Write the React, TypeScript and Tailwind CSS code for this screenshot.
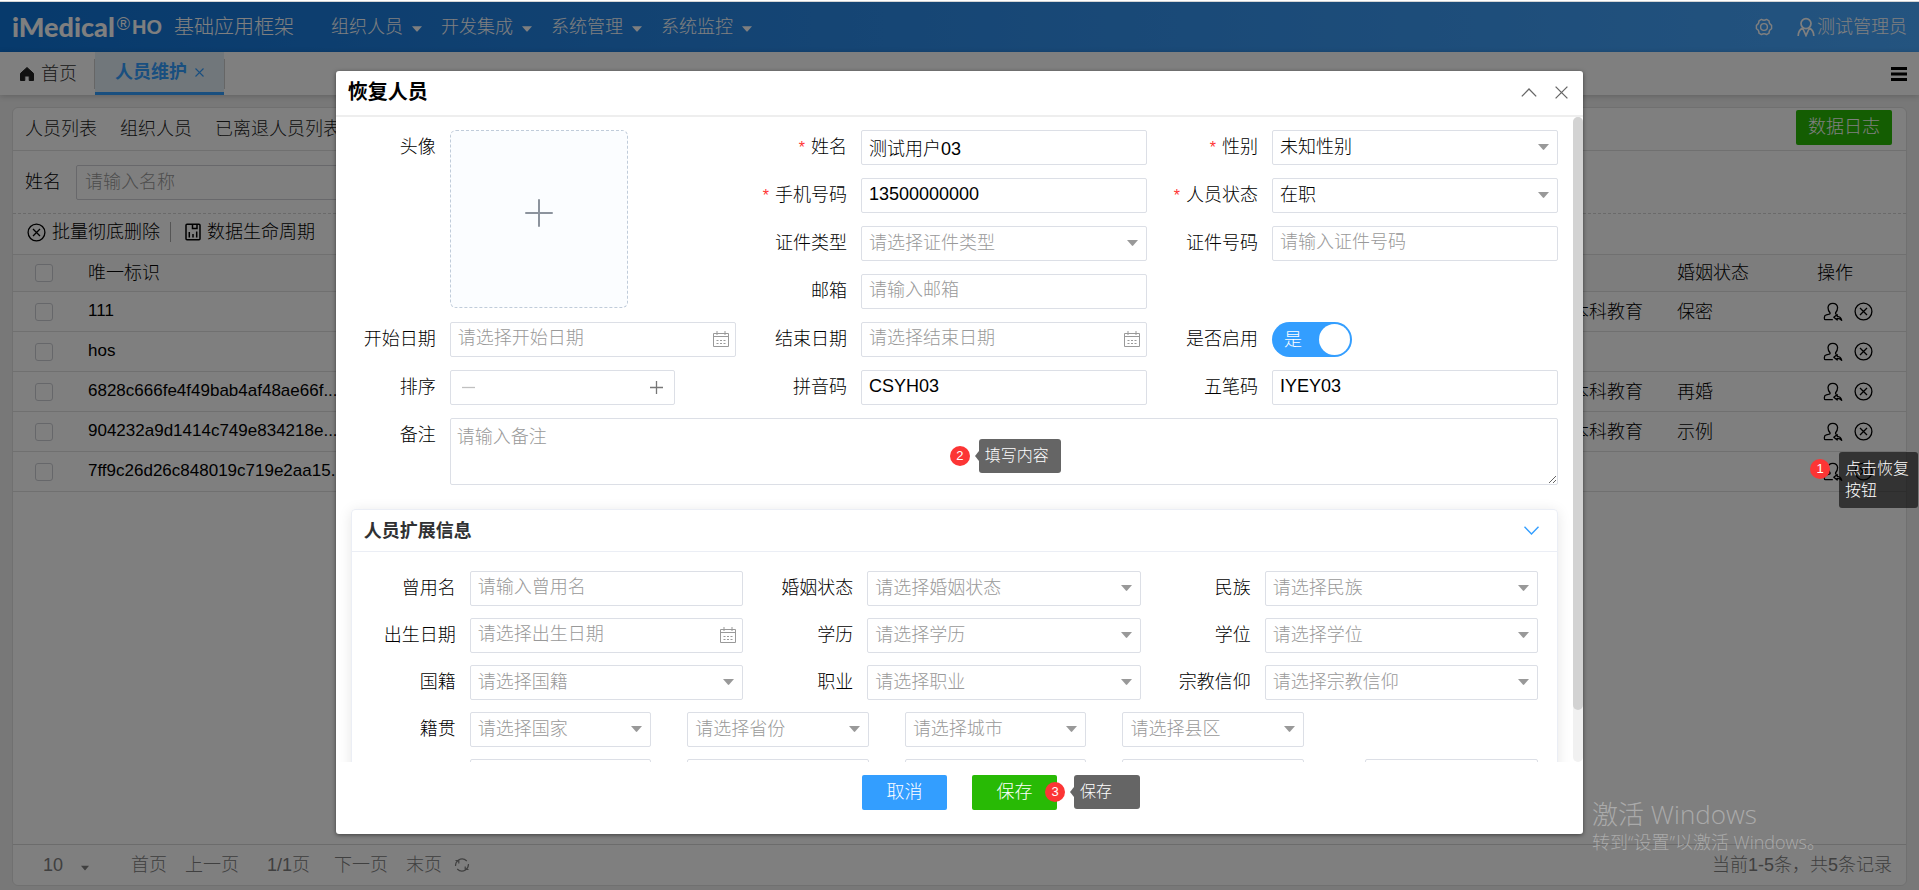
import { useId, type ReactNode } from "react";

const menus = ["组织人员", "开发集成", "系统管理", "系统监控"];

const people = [
  { id: "111", education: "大学本科教育", marriage: "保密" },
  { id: "hos", education: "", marriage: "" },
  { id: "6828c666fe4f49bab4af48ae66f...", education: "大学本科教育", marriage: "再婚" },
  { id: "904232a9d1414c749e834218e...", education: "大学本科教育", marriage: "示例" },
  { id: "7ff9c26d26c848019c719e2aa15...", education: "", marriage: "" },
];

const box =
  "h-[35px] w-full rounded-[2px] border border-[#dcdfe6] bg-white pb-0.5 pl-[7px] text-lg leading-6 outline-none placeholder:text-[#999] placeholder:opacity-100";

function Caret({ className }: { className?: string }) {
  return (
    <svg className={className} width="11" height="6" viewBox="0 0 11 6" aria-hidden="true">
      <path d="M0 0H11L6.2 5.6Q5.5 6.3 4.8 5.6Z" fill="currentColor" />
    </svg>
  );
}

function CircleX() {
  return (
    <svg width="19" height="19" viewBox="0 0 19 19" fill="none" stroke="currentColor" strokeWidth="1.3" aria-hidden="true">
      <circle cx="9.5" cy="9.5" r="8.4" />
      <path d="M6 6L13 13M13 6L6 13" />
    </svg>
  );
}

function RestoreUser() {
  return (
    <svg width="20" height="20" viewBox="0 0 20 20" fill="none" stroke="currentColor" strokeWidth="1.3" strokeLinejoin="round" aria-hidden="true">
      <path d="M9.8 17.6H2.4Q1.4 17.6 1.4 16.4V15.2Q1.4 13.2 3.4 12.8L6.2 12.2Q7.4 11.8 7 10.8Q5 8.6 5 5.6Q5.4 1.4 9.8 1.4Q14.2 1.4 14.6 5.6Q14.6 8.6 12.6 10.8Q12.2 11.8 13.4 12.4" />
      <path d="M10.8 15.2L14.2 12.6V14.3Q18 14.6 18.7 18.4Q17 16.2 14.2 16.3V18Z" />
    </svg>
  );
}

function CalendarIcon() {
  return (
    <svg className="pointer-events-none absolute right-[7px] top-2" width="16" height="18" viewBox="0 0 16 18" fill="none" stroke="#999" aria-hidden="true">
      <path d="M.5 3.5H15.5V16.5H.5ZM.5 6.5H15.5M4 1V5M12 1V5" />
      <path d="M3.5 10.5H12.5M3.5 13.5H12.5" strokeDasharray="2 1.5" />
    </svg>
  );
}

function Field({
  label,
  required,
  className = "",
  labelWidth = "w-[114px]",
  children,
}: {
  label: string;
  required?: boolean;
  className?: string;
  labelWidth?: string;
  children: (id: string) => ReactNode;
}) {
  const id = useId();
  return (
    <div className={`flex min-w-0 items-start ${className}`}>
      <label htmlFor={id} className={`${labelWidth} shrink-0 pr-3.5 text-right leading-[34px] whitespace-nowrap`}>
        {required && <span className="mr-1.5 text-base text-[#f33]">*</span>}
        {label}
      </label>
      <div className="relative min-w-0 flex-1">{children(id)}</div>
    </div>
  );
}

function Picker({ id, label, placeholder, value }: { id?: string; label?: string; placeholder?: string; value?: string }) {
  return (
    <div className="relative">
      <select id={id} aria-label={label} className={`${box} appearance-none pr-8 ${value ? "text-black" : "text-[#999]"}`}>
        <option>{value ?? placeholder}</option>
      </select>
      <Caret className="pointer-events-none absolute right-[9px] top-[14px] text-[#999]" />
    </div>
  );
}

function DateBox({ id, placeholder }: { id: string; placeholder: string }) {
  return (
    <>
      <input id={id} type="text" placeholder={placeholder} className={`${box} pr-8`} />
      <CalendarIcon />
    </>
  );
}

function Step({ n, text, className }: { n: number; text: string; className: string }) {
  return (
    <div className={`absolute flex items-center text-base ${className}`}>
      <span className="flex size-5 shrink-0 items-center justify-center rounded-full bg-[#fc3535] text-[13px] text-white">{n}</span>
      <span className="ml-[5px] size-0 shrink-0 border-y-5 border-r-4 border-y-transparent border-r-[#656565]" />
      <span className="min-w-[66px] rounded-[3px] bg-[#656565] py-1.5 pl-1.5 pr-3 leading-[22px] whitespace-nowrap text-white">{text}</span>
    </div>
  );
}

function TopBar() {
  return (
    <header className="flex h-[50px] items-center bg-linear-to-r from-[#0e74d8] to-[#48a8ff] px-3 text-lg text-white">
      <div className="flex w-[162px] items-center">
        <span className="font-[Lato] text-[27px] leading-8 font-black">iMedical</span>
        <span className="ml-0.5 pb-1.5 text-lg leading-5 font-normal">®</span>
        <span className="ml-0.5 text-xl font-bold">HO</span>
      </div>
      <span className="text-xl">基础应用框架</span>
      <nav className="ml-[37px] flex flex-1 gap-[19px]">
        {menus.map((m) => (
          <a key={m} href="#" className="flex items-center gap-[9px]">
            {m}
            <Caret className="mt-1 w-2.5" />
          </a>
        ))}
      </nav>
      <button aria-label="设置" className="mr-6">
        <svg width="18" height="18" viewBox="0 0 18 18" fill="none" stroke="currentColor" strokeWidth="1.4" strokeLinejoin="round">
          <path d="M6.4 1.4Q9 3.2 11.6 1.4L14 2.8Q13.8 5.8 16.6 7.3V10.7Q13.8 12.2 14 15.2L11.6 16.6Q9 14.8 6.4 16.6L4 15.2Q4.2 12.2 1.4 10.7V7.3Q4.2 5.8 4 2.8Z" />
          <circle cx="9" cy="9" r="3.4" />
        </svg>
      </button>
      <button className="flex items-center gap-0.5">
        <svg width="18" height="20" viewBox="0 0 18 20" fill="none" stroke="currentColor" strokeWidth="1.7">
          <circle cx="9" cy="6.6" r="5" />
          <path d="M1.2 19Q1.2 13.4 5.6 11M16.8 19Q16.8 13.4 12.4 11M5.6 11L9 18.5L12.4 11" />
        </svg>
        测试管理员
      </button>
    </header>
  );
}

function TabStrip() {
  return (
    <div className="flex h-[43px] shrink-0 items-center bg-white text-lg shadow-[0_1px_6px_rgba(0,0,0,0.2)]">
      <a href="#" className="flex h-[30px] w-[95px] items-center gap-1.5 border-r border-[#ccc] pl-[19px] text-[#333]">
        <svg width="16" height="16" viewBox="0 0 16 16" fill="#222" aria-hidden="true">
          <path d="M8 1.5L14.5 7.4V14.5H10.2V10H5.8V14.5H1.5V7.4Z" stroke="#222" strokeLinejoin="round" />
        </svg>
        首页
      </a>
      <div className="flex h-full w-[129px] items-center justify-center gap-2 border-b-3 border-[#339eff] bg-[#e3eef7] font-bold text-[#339eff]">
        人员维护
        <button aria-label="关闭">
          <svg width="9" height="9" viewBox="0 0 9 9" stroke="currentColor" strokeWidth="1.1">
            <path d="M.5 .5L8.5 8.5M8.5 .5L.5 8.5" />
          </svg>
        </button>
      </div>
      <span className="h-[30px] w-px bg-[#ccc]" />
      <button aria-label="菜单" className="ml-auto mr-3">
        <svg width="16" height="14" viewBox="0 0 16 14" fill="#000">
          <path d="M0 0H16V3H0ZM0 5.5H16V8.5H0ZM0 11H16V14H0Z" />
        </svg>
      </button>
    </div>
  );
}

const check = "block size-[18px] appearance-none rounded-[3px] border border-[#ccced4] bg-white";

function PeoplePage() {
  return (
    <main className="mx-3 mt-3 mb-1 flex flex-1 flex-col rounded-md border border-[#e0e0e0] bg-white text-lg">
      <div className="flex h-[43px] shrink-0 items-center gap-[23px] border-b border-[#e0e0e0] pr-3.5 pl-3 text-[#222]">
        <a href="#">人员列表</a>
        <a href="#">组织人员</a>
        <a href="#">已离退人员列表</a>
        <button className="mb-1 ml-auto h-[35px] rounded-[2px] bg-[#28ba05] px-3 text-white">数据日志</button>
      </div>
      <div className="flex h-[63px] shrink-0 items-center border-b border-dashed border-[#d4d4d4] pl-3">
        <label htmlFor="search" className="w-[51px]">姓名</label>
        <input id="search" placeholder="请输入名称" className="h-[35px] w-[400px] rounded-[2px] border border-[#d0d0d6] px-2 placeholder:text-[#999]" />
      </div>
      <div className="flex h-10 shrink-0 items-center pb-1 pl-3.5">
        <button className="flex items-center gap-1.5"><CircleX />批量彻底删除</button>
        <span className="mx-2.5 h-5 w-px bg-[#aaa]" />
        <button className="flex items-center gap-1.5">
          <svg className="ml-1" width="16" height="18" viewBox="0 0 16 18" fill="none" stroke="currentColor" strokeWidth="1.5" aria-hidden="true">
            <rect x="1" y="1.2" width="14" height="15.6" rx="1" />
            <path d="M7.5 1.2V5.5H12V1.2M4.3 9V14.5M8 11V14.5M11.7 8.5V14.5" />
          </svg>
          数据生命周期
        </button>
      </div>
      <table className="w-full table-fixed border-t border-[#e0e0e0] text-left">
        <colgroup>
          <col className="w-[75px]" />
          <col />
          <col className="w-[142px]" />
          <col className="w-[140px]" />
          <col className="w-[89px]" />
        </colgroup>
        <thead>
          <tr className="h-[37px] border-b border-[#e0e0e0] bg-[#fafafa]">
            <th className="pl-[22px]"><input type="checkbox" aria-label="全选" className={check} /></th>
            <th className="font-light">唯一标识</th>
            <th className="font-light">学历</th>
            <th className="font-light">婚姻状态</th>
            <th className="font-light">操作</th>
          </tr>
        </thead>
        <tbody>
          {people.map((p) => (
            <tr key={p.id} className="h-10 border-b border-[#e0e0e0]">
              <td className="pl-[22px]"><input type="checkbox" aria-label={p.id} className={check} /></td>
              <td className="text-[17px]">{p.id}</td>
              <td>{p.education}</td>
              <td>{p.marriage}</td>
              <td>
                <div className="flex items-center gap-[11px] pl-1.5">
                  <button aria-label="恢复"><RestoreUser /></button>
                  <button aria-label="删除"><CircleX /></button>
                </div>
              </td>
            </tr>
          ))}
        </tbody>
      </table>
      <footer className="mt-auto flex h-[41px] items-center border-t border-[#d8d8d8] pr-3.5 pl-[30px] text-[#808080]">
        <div className="relative w-[88px]">
          <select aria-label="每页条数" className="w-12 appearance-none bg-transparent outline-none"><option>10</option></select>
          <Caret className="pointer-events-none absolute top-[14px] left-[38px] w-2" />
        </div>
        <div className="flex items-center gap-[18px]">
          <a href="#">首页</a>
          <a href="#">上一页</a>
          <span className="mr-1.5 ml-2.5">1/1页</span>
          <a href="#">下一页</a>
          <a href="#">末页</a>
        </div>
        <button aria-label="刷新" className="ml-3">
          <svg width="16" height="16" viewBox="0 0 16 16" fill="none" stroke="currentColor" strokeWidth="1.2">
            <path d="M1.5 9Q1.5 5 4.5 3Q9 .4 12.8 4M14.5 7Q14.5 11 11.5 13Q7 15.6 3.2 12M1.5 3.5H4.8V6.5M14.5 12.5H11.2V9.5" />
          </svg>
        </button>
        <span className="ml-auto">当前1-5条，共5条记录</span>
      </footer>
    </main>
  );
}

function BaseForm() {
  return (
    <div className="grid grid-cols-3 gap-x-[11px] gap-y-[13px] pt-[13px]">
      <Field label="头像" className="row-span-4">
        {(id) => (
          <button id={id} aria-label="上传头像" className="flex size-[178px] items-center justify-center rounded-md border border-dashed border-[#c0ccda] bg-[#fbfdff] pb-3">
            <svg width="28" height="28" viewBox="0 0 28 28" stroke="#8c939d" strokeWidth="2" strokeLinecap="round">
              <path d="M14 1V27M1 14H27" />
            </svg>
          </button>
        )}
      </Field>
      <Field label="姓名" required>{(id) => <input id={id} defaultValue="测试用户03" className={box} />}</Field>
      <Field label="性别" required>{(id) => <Picker id={id} value="未知性别" />}</Field>
      <Field label="手机号码" required>{(id) => <input id={id} defaultValue="13500000000" className={box} />}</Field>
      <Field label="人员状态" required>{(id) => <Picker id={id} value="在职" />}</Field>
      <Field label="证件类型">{(id) => <Picker id={id} placeholder="请选择证件类型" />}</Field>
      <Field label="证件号码">{(id) => <input id={id} placeholder="请输入证件号码" className={box} />}</Field>
      <Field label="邮箱" className="col-start-2">{(id) => <input id={id} placeholder="请输入邮箱" className={box} />}</Field>
      <Field label="开始日期" className="col-start-1">{(id) => <DateBox id={id} placeholder="请选择开始日期" />}</Field>
      <Field label="结束日期">{(id) => <DateBox id={id} placeholder="请选择结束日期" />}</Field>
      <Field label="是否启用">
        {(id) => (
          <label className="flex h-[35px] w-20 items-center justify-between rounded-full bg-[#339eff] pr-0.5 pl-3 text-white">
            <input id={id} type="checkbox" role="switch" defaultChecked className="sr-only" />
            是
            <span className="size-[31px] rounded-full bg-white" />
          </label>
        )}
      </Field>
      <Field label="排序">
        {(id) => (
          <div className="flex h-[35px] w-[225px] items-center rounded-[2px] border border-[#dcdfe6] px-[11px]">
            <button aria-label="减少">
              <svg width="13" height="13" viewBox="0 0 13 13" stroke="#c0c0c0" strokeWidth="1.3"><path d="M0 6.5H13" /></svg>
            </button>
            <input id={id} className="w-0 flex-1 text-center outline-none" />
            <button aria-label="增加">
              <svg width="13" height="13" viewBox="0 0 13 13" stroke="#777" strokeWidth="1.3"><path d="M0 6.5H13M6.5 0V13" /></svg>
            </button>
          </div>
        )}
      </Field>
      <Field label="拼音码">{(id) => <input id={id} defaultValue="CSYH03" className={box} />}</Field>
      <Field label="五笔码">{(id) => <input id={id} defaultValue="IYEY03" className={box} />}</Field>
      <Field label="备注" className="col-span-3">
        {(id) => (
          <>
            <textarea
              id={id}
              placeholder="请输入备注"
              className="block h-[67px] w-full rounded-[2px] border border-[#dcdfe6] px-1.5 py-1.5 leading-6 outline-none placeholder:text-[#999]"
            />
            <Step n={2} text="填写内容" className="top-[21px] left-[500px]" />
          </>
        )}
      </Field>
    </div>
  );
}

const wide = "w-[113px]";

function ExtendedInfo() {
  return (
    <section className="mt-6 ml-[15px] rounded-[4px] border border-[#ebeef5] shadow-[0_2px_14px_rgba(0,0,0,0.1)]">
      <div className="flex h-[42px] items-center justify-between border-b border-[#ebeef5] pr-[18px] pl-3">
        <h3 className="font-bold text-[#303133]">人员扩展信息</h3>
        <button aria-label="收起">
          <svg width="15" height="9" viewBox="0 0 15 9" fill="none" stroke="#339eff" strokeWidth="1.4"><path d="M.5 .8L7.5 8L14.5 .8" /></svg>
        </button>
      </div>
      <div className="grid grid-cols-3 gap-x-[11px] gap-y-3 pt-[19px] pr-[19px] pb-5 pl-[5px]">
        <Field labelWidth={wide} label="曾用名">{(id) => <input id={id} placeholder="请输入曾用名" className={box} />}</Field>
        <Field labelWidth={wide} label="婚姻状态">{(id) => <Picker id={id} placeholder="请选择婚姻状态" />}</Field>
        <Field labelWidth={wide} label="民族">{(id) => <Picker id={id} placeholder="请选择民族" />}</Field>
        <Field labelWidth={wide} label="出生日期">{(id) => <DateBox id={id} placeholder="请选择出生日期" />}</Field>
        <Field labelWidth={wide} label="学历">{(id) => <Picker id={id} placeholder="请选择学历" />}</Field>
        <Field labelWidth={wide} label="学位">{(id) => <Picker id={id} placeholder="请选择学位" />}</Field>
        <Field labelWidth={wide} label="国籍">{(id) => <Picker id={id} placeholder="请选择国籍" />}</Field>
        <Field labelWidth={wide} label="职业">{(id) => <Picker id={id} placeholder="请选择职业" />}</Field>
        <Field labelWidth={wide} label="宗教信仰">{(id) => <Picker id={id} placeholder="请选择宗教信仰" />}</Field>
        <Field labelWidth={wide} label="籍贯" className="col-span-3">
          {(id) => (
            <div className="grid grid-cols-[833fr_173fr] gap-[61px]">
              <div className="grid grid-cols-4 gap-9">
                <Picker id={id} placeholder="请选择国家" />
                <Picker label="省份" placeholder="请选择省份" />
                <Picker label="城市" placeholder="请选择城市" />
                <Picker label="县区" placeholder="请选择县区" />
              </div>
            </div>
          )}
        </Field>
        <div className="col-span-3 grid grid-cols-[833fr_173fr] gap-[61px] pl-[113px]">
          <div className="grid grid-cols-4 gap-9">
            <Picker label="现住国家" />
            <Picker label="现住省份" />
            <Picker label="现住城市" />
            <Picker label="现住县区" />
          </div>
          <input aria-label="详细地址" className={box} />
        </div>
      </div>
    </section>
  );
}

function RestoreDialog() {
  return (
    <div role="dialog" aria-label="恢复人员" className="flex h-full w-[65%] flex-col rounded-[3px] bg-white text-lg shadow-[0_1px_4px_rgba(0,0,0,0.5)]">
      <div className="flex h-[46px] shrink-0 items-center border-b-2 border-[#eee] pr-[15px] pb-0.5 pl-3">
        <h2 className="flex-1 text-xl font-bold">恢复人员</h2>
        <button aria-label="折叠" className="mr-[18px]">
          <svg width="16" height="9" viewBox="0 0 16 9" fill="none" stroke="#666" strokeWidth="1.3"><path d="M.8 8.4L8 1L15.2 8.4" /></svg>
        </button>
        <button aria-label="关闭">
          <svg width="13" height="13" viewBox="0 0 13 13" fill="none" stroke="#666" strokeWidth="1.3"><path d="M.6 .6L12.4 12.4M12.4 .6L.6 12.4" /></svg>
        </button>
      </div>
      <div className="flex min-h-0 flex-1">
        <div className="flex-1 overflow-y-auto pr-[15px] [scrollbar-width:none]">
          <BaseForm />
          <ExtendedInfo />
        </div>
        <div className="w-2.5 shrink-0 rounded-full bg-[#f1f1f1]">
          <div className="h-[92%] rounded-full bg-[#d3d3d3]" />
        </div>
      </div>
      <div className="flex h-[72px] shrink-0 justify-center gap-[25px] pt-[13px] text-white">
        <button className="h-[35px] w-[85px] rounded-[2px] bg-[#339eff] pb-0.5">取消</button>
        <div className="relative h-[35px]">
          <button className="h-[35px] w-[85px] rounded-[2px] bg-[#28ba05] pb-0.5">保存</button>
          <Step n={3} text="保存" className="top-0 left-[73px]" />
        </div>
      </div>
    </div>
  );
}

export default function App() {
  return (
    <div className="relative font-['Liberation_Sans','Noto_Sans_CJK_SC',sans-serif] font-light text-black">
      <div className="flex min-h-screen flex-col bg-[#f0f0f0]">
        <div className="h-0.5 shrink-0 border-b border-[#d4d4d4] bg-white" />
        <TopBar />
        <TabStrip />
        <PeoplePage />
      </div>
      <div className="absolute inset-x-0 top-0.5 bottom-0 flex justify-center bg-black/50 pt-[69px] pb-14">
        <RestoreDialog />
      </div>
      <div className="absolute top-[452px] right-px flex items-start text-base text-white">
        <span className="mt-[7px] mr-[9px] flex size-5 items-center justify-center rounded-full bg-[#fc3535] text-[13px]">1</span>
        <span className="w-[79px] rounded-[3px] bg-black/60 px-1.5 py-1.5 leading-[22px]">点击恢复按钮</span>
      </div>
      <div className="pointer-events-none absolute right-[94px] bottom-9 font-['Open_Sans','Noto_Sans_CJK_SC',sans-serif] text-[#aaa]">
        <p className="text-[26px] leading-8">激活 Windows</p>
        <p className="text-lg leading-6">转到“设置”以激活 Windows。</p>
      </div>
    </div>
  );
}
